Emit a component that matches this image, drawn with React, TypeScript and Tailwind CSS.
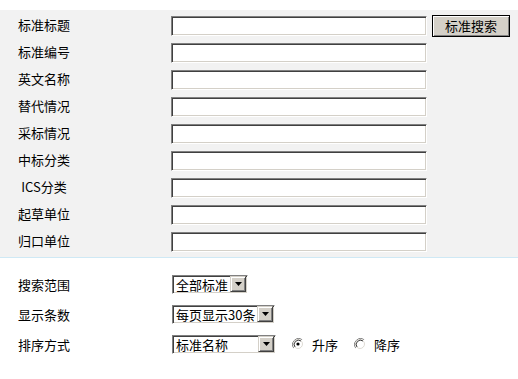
const fields = ["标准标题", "标准编号", "英文名称", "替代情况", "采标情况", "中标分类", "ICS分类", "起草单位", "归口单位"];

const font = { fontFamily: '"Noto Sans CJK SC", "Noto Sans", sans-serif' };

function TextBox() {
  return (
    <div className="h-[20px] w-[256px] border border-t-[#808080] border-l-[#808080] border-b-white border-r-white bg-white shadow-[inset_1px_1px_0_#404040,inset_-1px_-1px_0_#d4d0c8]" />
  );
}

function Arrow() {
  return (
    <div className="flex h-[16px] w-[16px] items-center justify-center border border-t-[#d4d0c8] border-l-[#d4d0c8] border-b-[#404040] border-r-[#404040] bg-[#d4d0c8] shadow-[inset_1px_1px_0_#ffffff,inset_-1px_-1px_0_#808080]">
      <svg width="7" height="4" viewBox="0 0 7 4">
        <path d="M0 0h7L3.5 4z" fill="#000" />
      </svg>
    </div>
  );
}

function Select({ label, width }: { label: string; width: string }) {
  return (
    <div className={`flex h-[19px] items-center justify-between border border-t-[#808080] border-l-[#808080] border-b-white border-r-white bg-white pl-[3px] pr-[1px] shadow-[inset_1px_1px_0_#404040,inset_-1px_-1px_0_#d4d0c8] ${width}`}>
      <span className="whitespace-nowrap text-[13px] leading-none text-black">{label}</span>
      <Arrow />
    </div>
  );
}

function Radio({ checked }: { checked?: boolean }) {
  return (
    <svg width="12" height="12" viewBox="0 0 12 12">
      <path d="M10.2 1.8A6 6 0 0 0 1.8 10.2" fill="none" stroke="#808080" strokeWidth="1" />
      <path d="M1.8 10.2A6 6 0 0 0 10.2 1.8" fill="none" stroke="#ffffff" strokeWidth="1" />
      <circle cx="6" cy="6" r="4.5" fill="#ffffff" stroke="#d4d0c8" strokeWidth="0.8" />
      <path d="M9 3A4.3 4.3 0 0 0 3 9" fill="none" stroke="#404040" strokeWidth="1" />
      {checked ? <circle cx="6" cy="6" r="1.6" fill="#000" /> : null}
    </svg>
  );
}

export default function App() {
  return (
    <div className="h-[379px] w-[518px] overflow-hidden bg-white pt-[10px] text-[13px] text-black" style={font}>
      <div className="border-b border-[#cfe9f5] bg-[#f2f2f2] pb-[2px] pt-[2px]">
        {fields.map((field, index) => (
          <div key={field} className="flex h-[27px] items-center">
            <div className="w-[171px] pl-[18px]">
              <span className="-mt-[3px] block w-[52px] whitespace-nowrap text-center leading-none">{field}</span>
            </div>
            <TextBox />
            {index === 0 ? (
              <button className="ml-[5px] h-[22px] w-[78px] border border-black bg-[#d4d0c8] text-[13px] leading-none shadow-[inset_1px_1px_0_#ffffff,inset_-1px_-1px_0_#808080]">
                标准搜索
              </button>
            ) : null}
          </div>
        ))}
      </div>

      <div className="pt-[11px]">
        <div className="flex h-[30px] items-center">
          <div className="w-[172px] pl-[18px] leading-none">搜索范围</div>
          <Select label="全部标准" width="w-[76px]" />
        </div>
        <div className="flex h-[30px] items-center">
          <div className="w-[172px] pl-[18px] leading-none">显示条数</div>
          <Select label="每页显示30条" width="w-[103px]" />
        </div>
        <div className="flex h-[30px] items-center">
          <div className="w-[172px] pl-[18px] leading-none">排序方式</div>
          <Select label="标准名称" width="w-[104px]" />
          <div className="ml-[16px] flex items-center">
            <Radio checked />
            <span className="ml-[8px] leading-none">升序</span>
          </div>
          <div className="ml-[16px] flex items-center">
            <Radio />
            <span className="ml-[8px] leading-none">降序</span>
          </div>
        </div>
      </div>
    </div>
  );
}
